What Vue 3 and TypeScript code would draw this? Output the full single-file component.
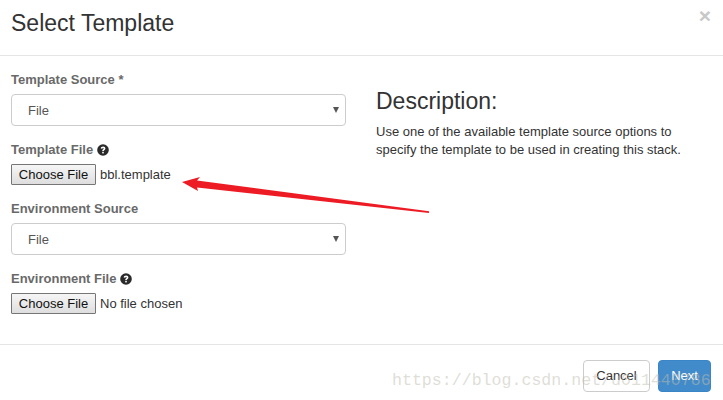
<script setup lang="ts">
const description =
  'Use one of the available template source options to specify the template to be used in creating this stack.';
</script>

<template>
  <div class="c-modal">
    <header class="c-modal__header">
      <h1 class="c-modal__title">Select Template</h1>
      <button class="c-modal__close" type="button">×</button>
    </header>

    <main class="c-modal__body">
      <form class="c-form">
        <label class="c-form__label">Template Source *</label>
        <div class="c-select">
          <span>File</span>
          <i class="c-select__caret"></i>
        </div>

        <label class="c-form__label c-form__label--file">
          Template File
          <svg class="c-help" viewBox="0 0 12 12" width="12" height="12">
            <circle cx="6" cy="6" r="5.8" fill="#2a2a2a" />
            <path d="M3.7 4.6c0-1.3 1-2.1 2.4-2.1s2.3.8 2.3 1.9c0 1.5-1.6 1.5-1.6 2.6H5.2c0-1.7 1.5-1.7 1.5-2.5 0-.3-.3-.6-.7-.6s-.7.3-.7.8z" fill="#fff" />
            <rect x="5.2" y="7.8" width="1.6" height="1.6" fill="#fff" />
          </svg>
        </label>
        <div class="c-file">
          <span class="c-file__button">Choose File</span>
          <span class="c-file__name">bbl.template</span>
        </div>

        <label class="c-form__label c-form__label--env">Environment Source</label>
        <div class="c-select">
          <span>File</span>
          <i class="c-select__caret"></i>
        </div>

        <label class="c-form__label c-form__label--file">
          Environment File
          <svg class="c-help" viewBox="0 0 12 12" width="12" height="12">
            <circle cx="6" cy="6" r="5.8" fill="#2a2a2a" />
            <path d="M3.7 4.6c0-1.3 1-2.1 2.4-2.1s2.3.8 2.3 1.9c0 1.5-1.6 1.5-1.6 2.6H5.2c0-1.7 1.5-1.7 1.5-2.5 0-.3-.3-.6-.7-.6s-.7.3-.7.8z" fill="#fff" />
            <rect x="5.2" y="7.8" width="1.6" height="1.6" fill="#fff" />
          </svg>
        </label>
        <div class="c-file">
          <span class="c-file__button">Choose File</span>
          <span class="c-file__name">No file chosen</span>
        </div>
      </form>

      <aside class="c-help-panel">
        <h2 class="c-help-panel__title">Description:</h2>
        <p class="c-help-panel__text">{{ description }}</p>
      </aside>
    </main>

    <footer class="c-modal__footer">
      <button class="c-btn" type="button">Cancel</button>
      <button class="c-btn c-btn--primary" type="button">Next</button>
    </footer>

    <!-- annotation drawn over the screenshot -->
    <svg class="c-arrow" viewBox="0 0 723 400" width="723" height="400">
      <path d="M182 182 L200 177 L197 180.5 L429 211.3 L429 213 L197 187.5 L198 191 Z" fill="#ed1c24" />
    </svg>
    <div class="c-watermark">https://blog.csdn.net/u011440786</div>
  </div>
</template>

<style scoped>
  .c-modal {
    position: relative;
    width: 723px;
    height: 400px;
    overflow: hidden;
    background: #fff;
    color: #333;
    font-family: 'Liberation Sans', Arial, sans-serif;
    font-size: 13px;
    line-height: 18px;
  }

  .c-modal__header {
    display: flex;
    justify-content: space-between;
    box-sizing: border-box;
    height: 56px;
    padding: 10px 12px 0 11px;
    border-bottom: 1px solid #e5e5e5;
  }

  .c-modal__title {
    margin: 0;
    color: #333;
    font-size: 23px;
    font-weight: 400;
    line-height: 27px;
  }

  .c-modal__close {
    height: 10px;
    padding: 0;
    border: 0;
    background: none;
    color: #c8c8c8;
    font-family: inherit;
    font-size: 21px;
    font-weight: 700;
    line-height: 9px;
  }

  .c-modal__body {
    display: flex;
    height: 288px;
    box-sizing: border-box;
    padding: 15px 11px 0;
  }

  .c-form {
    display: flex;
    flex-direction: column;
    width: 335px;
  }

  .c-form__label {
    display: flex;
    align-items: center;
    gap: 4px;
    height: 18px;
    margin-bottom: 5px;
    color: #696969;
    font-weight: 700;
  }

  .c-form__label--file {
    margin-top: 15px;
  }

  .c-form__label--env {
    margin-top: 15px;
  }

  .c-select {
    display: flex;
    align-items: center;
    justify-content: space-between;
    box-sizing: border-box;
    height: 32px;
    padding: 2px 6px 0 16px;
    border: 1px solid #ccc;
    border-radius: 4px;
    color: #555;
    font-size: 13px;
  }

  .c-select__caret {
    width: 0;
    height: 0;
    margin-top: -2px;
    border-top: 6px solid #555;
    border-right: 3px solid transparent;
    border-left: 3px solid transparent;
  }

  .c-file {
    display: flex;
    align-items: center;
    gap: 4px;
    height: 21px;
    color: #333;
    font-size: 13px;
  }

  .c-file__button {
    box-sizing: border-box;
    width: 85px;
    height: 21px;
    border: 1px solid #767676;
    border-radius: 1px;
    background: linear-gradient(#f6f6f6, #dedede);
    color: #111;
    line-height: 19px;
    text-align: center;
  }

  .c-help-panel {
    width: 330px;
    padding: 16px 0 0 30px;
  }

  .c-help-panel__title {
    margin: 0 0 8px;
    color: #333;
    font-size: 23px;
    font-weight: 400;
    line-height: 28px;
  }

  .c-help-panel__text {
    margin: 0;
    font-size: 13px;
    line-height: 18px;
  }

  .c-modal__footer {
    display: flex;
    justify-content: flex-end;
    gap: 8px;
    box-sizing: border-box;
    height: 56px;
    padding: 15px 12px 0;
    border-top: 1px solid #e5e5e5;
  }

  .c-btn {
    box-sizing: border-box;
    width: 67px;
    height: 32px;
    padding: 0 0 2px;
    border: 1px solid #ccc;
    border-radius: 4px;
    background: #fff;
    color: #333;
    font-family: inherit;
    font-size: 13px;
  }

  .c-btn--primary {
    width: 53px;
    border-color: #3a85c6;
    background: #428bca;
    color: #fff;
  }

  .c-arrow {
    position: absolute;
    top: 0;
    left: 0;
    pointer-events: none;
  }

  .c-watermark {
    position: absolute;
    top: 371px;
    left: 392px;
    color: rgba(190, 190, 175, 0.5);
    font-family: 'Liberation Mono', monospace;
    font-size: 16.6px;
    line-height: 20px;
    pointer-events: none;
  }
</style>
